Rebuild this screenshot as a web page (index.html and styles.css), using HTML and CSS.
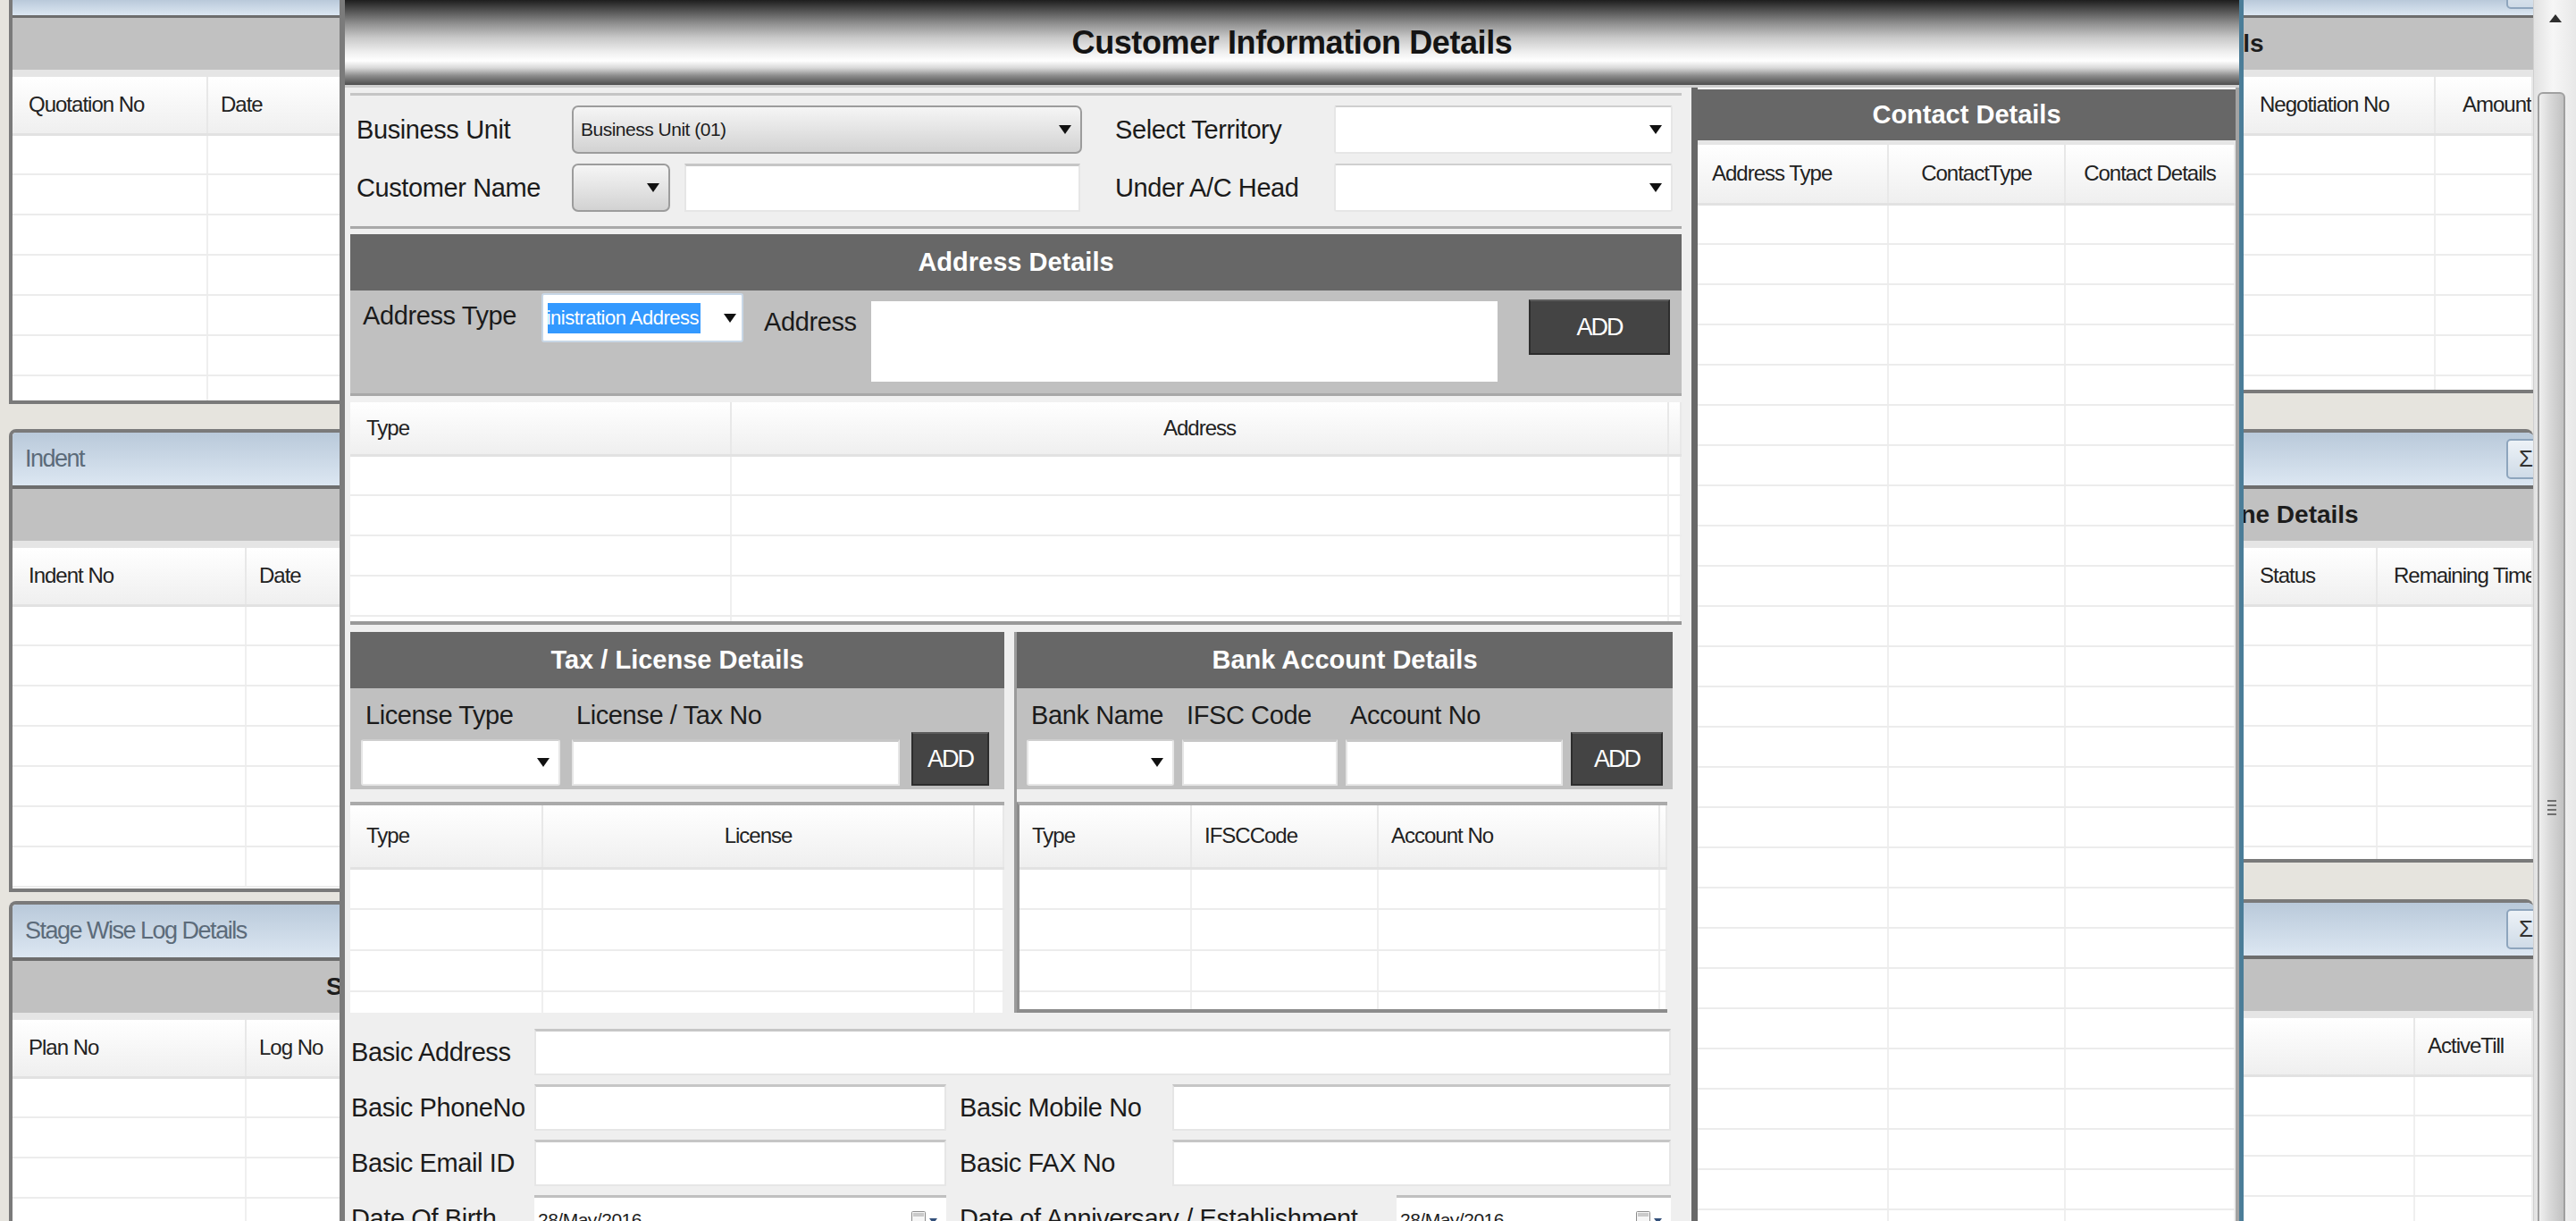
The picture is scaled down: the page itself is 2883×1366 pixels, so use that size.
FILE: index.html
```html
<!DOCTYPE html>
<html lang="en">

<head>
    <meta charset="UTF-8">
    <meta name="viewport" content="width=device-width, initial-scale=1.0">
    <title>Customer Information Details</title>
    <link rel="stylesheet" href="styles.css">
</head>

<body>
    <!-- the window behind the dialog -->
    <div class="desk">
        <div class="side">
            <div class="panel panel-cut left-a">
                <div class="panel-title"></div>
                <div class="panel-band"></div>
                <table class="grid">
                    <colgroup><col class="col-quote"><col></colgroup>
                    <thead><tr><th>Quotation No</th><th class="pad-14">Date</th></tr></thead>
                    <tbody>
                        <tr><td></td><td></td></tr>
                        <tr><td></td><td></td></tr>
                        <tr><td></td><td></td></tr>
                        <tr><td></td><td></td></tr>
                        <tr><td></td><td></td></tr>
                        <tr><td></td><td></td></tr>
                        <tr><td></td><td></td></tr>
                    </tbody>
                </table>
            </div>
            <div class="panel left-b">
                <div class="panel-title">Indent</div>
                <div class="panel-band"></div>
                <table class="grid">
                    <colgroup><col class="col-no"><col></colgroup>
                    <thead><tr><th>Indent No</th><th class="pad-14">Date</th></tr></thead>
                    <tbody>
                        <tr><td></td><td></td></tr>
                        <tr><td></td><td></td></tr>
                        <tr><td></td><td></td></tr>
                        <tr><td></td><td></td></tr>
                        <tr><td></td><td></td></tr>
                        <tr><td></td><td></td></tr>
                        <tr><td></td><td></td></tr>
                    </tbody>
                </table>
            </div>
            <div class="panel left-c">
                <div class="panel-title">Stage Wise Log Details</div>
                <div class="panel-band band-stage">Stage Wise Log Details</div>
                <table class="grid">
                    <colgroup><col class="col-no"><col></colgroup>
                    <thead><tr><th>Plan No</th><th class="pad-14">Log No</th></tr></thead>
                    <tbody>
                        <tr><td></td><td></td></tr>
                        <tr><td></td><td></td></tr>
                        <tr><td></td><td></td></tr>
                        <tr><td></td><td></td></tr>
                    </tbody>
                </table>
            </div>
        </div>

        <div class="middle"></div>

        <div class="side side-right">
            <div class="panel panel-cut right-a">
                <div class="panel-title"><span class="sigma">&Sigma;</span></div>
                <div class="panel-band band-nego">Negotiation Details</div>
                <table class="grid">
                    <colgroup><col class="col-hide"><col class="col-nego"><col></colgroup>
                    <thead><tr><th></th><th>Negotiation No</th><th class="pad-30">Amount</th></tr></thead>
                    <tbody>
                        <tr><td></td><td></td><td></td></tr>
                        <tr><td></td><td></td><td></td></tr>
                        <tr><td></td><td></td><td></td></tr>
                        <tr><td></td><td></td><td></td></tr>
                        <tr><td></td><td></td><td></td></tr>
                        <tr><td></td><td></td><td></td></tr>
                        <tr><td></td><td></td><td></td></tr>
                    </tbody>
                </table>
            </div>
            <div class="panel right-b">
                <div class="panel-title"><span class="sigma">&Sigma;</span></div>
                <div class="panel-band band-time">Timeline Details</div>
                <table class="grid">
                    <colgroup><col class="col-hide"><col class="col-status"><col></colgroup>
                    <thead><tr><th></th><th>Status</th><th>Remaining Time</th></tr></thead>
                    <tbody>
                        <tr><td></td><td></td><td></td></tr>
                        <tr><td></td><td></td><td></td></tr>
                        <tr><td></td><td></td><td></td></tr>
                        <tr><td></td><td></td><td></td></tr>
                        <tr><td></td><td></td><td></td></tr>
                        <tr><td></td><td></td><td></td></tr>
                        <tr><td></td><td></td><td></td></tr>
                    </tbody>
                </table>
            </div>
            <div class="panel right-c">
                <div class="panel-title"><span class="sigma">&Sigma;</span></div>
                <div class="panel-band"></div>
                <table class="grid">
                    <colgroup><col class="col-hide"><col class="col-blank"><col></colgroup>
                    <thead><tr><th></th><th></th><th class="pad-14">ActiveTill</th></tr></thead>
                    <tbody>
                        <tr><td></td><td></td><td></td></tr>
                        <tr><td></td><td></td><td></td></tr>
                        <tr><td></td><td></td><td></td></tr>
                        <tr><td></td><td></td><td></td></tr>
                    </tbody>
                </table>
            </div>
        </div>

        <div class="scrollbar">
            <span class="scroll-up"></span>
            <div class="scroll-thumb">
                <svg width="12" height="20" viewBox="0 0 12 20">
                    <path d="M1 3h10M1 8h10M1 13h10M1 18h10" stroke="#6f6f6f" stroke-width="2" />
                </svg>
            </div>
        </div>
    </div>

    <!-- dialog -->
    <div class="dialog">
        <div class="dialog-title">Customer Information Details</div>
        <div class="dialog-body">
            <div class="form-side">
                <div class="top-fields">
                    <span class="lbl">Business Unit</span>
                    <div class="combo combo-btn"><span class="combo-text">Business Unit (01)</span><span class="arrow"></span></div>
                    <span class="lbl lbl-gap">Select Territory</span>
                    <div class="combo"><span class="arrow"></span></div>

                    <span class="lbl">Customer Name</span>
                    <div class="name-field">
                        <div class="combo combo-btn combo-small"><span class="arrow"></span></div>
                        <div class="box"></div>
                    </div>
                    <span class="lbl lbl-gap">Under A/C Head</span>
                    <div class="combo"><span class="arrow"></span></div>
                </div>

                <div class="addr-block">
                    <div class="sec-head">Address Details</div>
                    <div class="addr-entry">
                        <span class="lbl addr-type-lbl">Address Type</span>
                        <div class="combo combo-focus">
                            <span class="combo-text"><span class="sel">Administration Address</span></span>
                            <span class="arrow"></span>
                        </div>
                        <span class="lbl addr-lbl">Address</span>
                        <div class="box addr-text"></div>
                        <button class="add addr-add">ADD</button>
                    </div>
                    <div class="addr-grid">
                        <table class="grid">
                            <colgroup><col class="col-type"><col class="col-addr"><col></colgroup>
                            <thead><tr><th>Type</th><th class="center">Address</th><th></th></tr></thead>
                            <tbody>
                                <tr><td></td><td></td><td></td></tr>
                                <tr><td></td><td></td><td></td></tr>
                                <tr><td></td><td></td><td></td></tr>
                                <tr><td></td><td></td><td></td></tr>
                                <tr><td></td><td></td><td></td></tr>
                            </tbody>
                        </table>
                    </div>
                </div>

                <div class="split">
                    <div class="tax">
                        <div class="sec-head">Tax / License Details</div>
                        <div class="entry">
                            <span class="lbl">License Type</span>
                            <span class="lbl">License / Tax No</span>
                            <div class="combo field"><span class="arrow"></span></div>
                            <div class="box field"></div>
                            <button class="add field">ADD</button>
                        </div>
                        <div class="sub-grid">
                            <table class="grid">
                                <colgroup><col class="col-ttype"><col class="col-lic"><col></colgroup>
                                <thead><tr><th>Type</th><th class="center">License</th><th></th></tr></thead>
                                <tbody>
                                    <tr><td></td><td></td><td></td></tr>
                                    <tr><td></td><td></td><td></td></tr>
                                    <tr><td></td><td></td><td></td></tr>
                                    <tr><td></td><td></td><td></td></tr>
                                </tbody>
                            </table>
                        </div>
                    </div>

                    <div class="bank">
                        <div class="sec-head">Bank Account Details</div>
                        <div class="entry">
                            <span class="lbl">Bank Name</span>
                            <span class="lbl">IFSC Code</span>
                            <span class="lbl">Account No</span>
                            <div class="combo field"><span class="arrow"></span></div>
                            <div class="box field"></div>
                            <div class="box field"></div>
                            <button class="add field">ADD</button>
                        </div>
                        <div class="sub-grid">
                            <table class="grid">
                                <colgroup><col class="col-btype"><col class="col-ifsc"><col class="col-acc"><col></colgroup>
                                <thead><tr><th>Type</th><th>IFSCCode</th><th>Account No</th><th></th></tr></thead>
                                <tbody>
                                    <tr><td></td><td></td><td></td><td></td></tr>
                                    <tr><td></td><td></td><td></td><td></td></tr>
                                    <tr><td></td><td></td><td></td><td></td></tr>
                                    <tr><td></td><td></td><td></td><td></td></tr>
                                </tbody>
                            </table>
                        </div>
                    </div>
                </div>

                <div class="basic">
                    <span class="lbl">Basic Address</span>
                    <div class="box span-3"></div>

                    <span class="lbl">Basic PhoneNo</span>
                    <div class="box"></div>
                    <span class="lbl lbl-in">Basic Mobile No</span>
                    <div class="box"></div>

                    <span class="lbl">Basic Email ID</span>
                    <div class="box"></div>
                    <span class="lbl lbl-in">Basic FAX No</span>
                    <div class="box"></div>

                    <div class="date-row">
                        <span class="lbl">Date Of Birth</span>
                        <div class="date-box">
                            <span>28/May/2016</span>
                            <svg class="cal" width="34" height="24" viewBox="0 0 34 24">
                                <rect x="1.5" y="2.5" width="15" height="19" rx="1" fill="#f6f6f6" stroke="#8c8c8c" />
                                <rect x="3" y="4" width="12" height="4" fill="#cacaca" />
                                <path d="M21 10h9l-4.5 6z" fill="#33507a" />
                            </svg>
                        </div>
                        <span class="lbl lbl-in">Date of Anniversary / Establishment</span>
                        <div class="date-box">
                            <span>28/May/2016</span>
                            <svg class="cal" width="34" height="24" viewBox="0 0 34 24">
                                <rect x="1.5" y="2.5" width="15" height="19" rx="1" fill="#f6f6f6" stroke="#8c8c8c" />
                                <rect x="3" y="4" width="12" height="4" fill="#cacaca" />
                                <path d="M21 10h9l-4.5 6z" fill="#33507a" />
                            </svg>
                        </div>
                    </div>
                </div>
            </div>

            <div class="contact-side">
                <div class="sec-head contact-head">Contact Details</div>
                <div class="contact-grid">
                    <table class="grid">
                        <colgroup><col class="col-ctype"><col class="col-ckind"><col></colgroup>
                        <thead><tr><th>Address Type</th><th class="center">ContactType</th><th class="center">Contact Details</th></tr></thead>
                        <tbody>
                            <tr><td></td><td></td><td></td></tr>
                            <tr><td></td><td></td><td></td></tr>
                            <tr><td></td><td></td><td></td></tr>
                            <tr><td></td><td></td><td></td></tr>
                            <tr><td></td><td></td><td></td></tr>
                            <tr><td></td><td></td><td></td></tr>
                            <tr><td></td><td></td><td></td></tr>
                            <tr><td></td><td></td><td></td></tr>
                            <tr><td></td><td></td><td></td></tr>
                            <tr><td></td><td></td><td></td></tr>
                            <tr><td></td><td></td><td></td></tr>
                            <tr><td></td><td></td><td></td></tr>
                            <tr><td></td><td></td><td></td></tr>
                            <tr><td></td><td></td><td></td></tr>
                            <tr><td></td><td></td><td></td></tr>
                            <tr><td></td><td></td><td></td></tr>
                            <tr><td></td><td></td><td></td></tr>
                            <tr><td></td><td></td><td></td></tr>
                            <tr><td></td><td></td><td></td></tr>
                            <tr><td></td><td></td><td></td></tr>
                            <tr><td></td><td></td><td></td></tr>
                            <tr><td></td><td></td><td></td></tr>
                            <tr><td></td><td></td><td></td></tr>
                            <tr><td></td><td></td><td></td></tr>
                            <tr><td></td><td></td><td></td></tr>
                            <tr><td></td><td></td><td></td></tr>
                        </tbody>
                    </table>
                </div>
            </div>
        </div>
    </div>
</body>

</html>
```

FILE: styles.css
```css
* {
    box-sizing: border-box;
    margin: 0;
    padding: 0;
}

body {
    position: relative;
    width: 2883px;
    height: 1366px;
    overflow: hidden;
    background-color: #e6e4de;
    font-family: "Liberation Sans", Arial, sans-serif;
    color: #1d1d1d;
}

/* ---------- window behind ---------- */

.desk {
    display: grid;
    grid-template-columns: 690px 1fr 635px 48px;
    height: 1366px;
    padding-left: 10px;
}

.side {
    display: flex;
    flex-direction: column;
    min-height: 0;
    overflow: hidden;
}

.panel {
    flex-shrink: 0;
    display: flex;
    flex-direction: column;
    overflow: hidden;
    background-color: #fff;
    border: 4px solid #7a7a7a;
    border-radius: 8px 8px 0 0;
}

.panel-cut {
    border-top: 0;
    border-radius: 0;
}

.side-right .panel {
    border-right: 0;
}

.left-a {
    height: 452px;
}

.left-b {
    height: 518px;
    margin-top: 28px;
}

.left-c {
    flex: 1;
    margin-top: 10px;
    border-bottom: 0;
}

.right-a {
    height: 440px;
}

.right-b {
    height: 485px;
    margin-top: 40px;
}

.right-c {
    flex: 1;
    margin-top: 41px;
    border-bottom: 0;
}

.panel-title {
    flex-shrink: 0;
    height: 63px;
    display: flex;
    align-items: center;
    padding-left: 14px;
    background: linear-gradient(#b9c9da, #dce7f2);
    border-bottom: 4px solid #6d6d6d;
    font-size: 27px;
    letter-spacing: -1.5px;
    color: #5c6b7a;
    overflow: hidden;
}

.panel-cut .panel-title {
    height: 20px;
    border-bottom-width: 3px;
}

.sigma {
    flex-shrink: 0;
    width: 50px;
    height: 45px;
    margin-left: auto;
    margin-right: -20px;
    padding-left: 12px;
    border: 2px solid #8ea5bd;
    border-radius: 5px;
    background: linear-gradient(#edf2f7, #cfdbe7);
    font-size: 26px;
    line-height: 41px;
    letter-spacing: 0;
    color: #333;
}

.panel-cut .sigma {
    align-self: flex-start;
    margin-top: -35px;
}

.panel-band {
    flex-shrink: 0;
    height: 66px;
    display: flex;
    align-items: center;
    background-color: #c1c1c1;
    border-bottom: 8px solid #e5e5e5;
    font-weight: bold;
    font-size: 28px;
    white-space: nowrap;
}

.band-stage {
    padding-left: 351px;
}

.band-nego {
    padding-left: 76px;
}

.band-time {
    padding-left: 223px;
}

/* grids */

.grid {
    width: 100%;
    border-collapse: collapse;
    table-layout: fixed;
    background-color: #fff;
}

.grid th {
    height: 64px;
    padding-left: 18px;
    background: linear-gradient(#ffffff, #efefef);
    border-right: 2px solid #e8e8e8;
    border-bottom: 3px solid #e2e2e2;
    text-align: left;
    font-weight: normal;
    font-size: 24px;
    letter-spacing: -1px;
    color: #222;
    white-space: nowrap;
    overflow: hidden;
}

.grid td {
    height: 45px;
    background-color: #fff;
    border-right: 2px solid #efefef;
    border-bottom: 2px solid #ececec;
}

.grid th.center {
    padding-left: 0;
    text-align: center;
}

.grid th.pad-14 {
    padding-left: 14px;
}

.grid th.pad-30 {
    padding-left: 30px;
}

.col-quote { width: 218px; }
.col-no { width: 261px; }
.col-hide { width: 306px; }
.col-nego { width: 215px; }
.col-status { width: 150px; }
.col-blank { width: 192px; }

.scrollbar {
    display: flex;
    flex-direction: column;
    align-items: flex-start;
    overflow: hidden;
    background: linear-gradient(90deg, #e2e2e2, #f6f6f6 45%, #e8e8e8);
    border-left: 1px solid #d0d0d0;
}

.scroll-up {
    margin: 16px 0 0 17px;
    border-left: 7px solid transparent;
    border-right: 7px solid transparent;
    border-bottom: 9px solid #2e2e2e;
}

.scroll-thumb {
    flex-shrink: 0;
    width: 31px;
    height: 1600px;
    margin: 78px 0 0 4px;
    display: flex;
    align-items: center;
    justify-content: center;
    border: 2px solid #a0a0a0;
    border-radius: 6px;
    background: linear-gradient(90deg, #efefef, #d6d6d6 50%, #c2c2c2);
}

/* ---------- dialog ---------- */

.dialog {
    position: absolute;
    top: 0;
    left: 380px;
    width: 2131px;
    height: 1366px;
    display: flex;
    flex-direction: column;
    background-color: #efefef;
    border-left: 6px solid #7b7b7b;
    border-right: 5px solid #4b7d98;
}

.dialog-title {
    flex-shrink: 0;
    height: 98px;
    display: flex;
    align-items: center;
    justify-content: center;
    border-bottom: 3px solid #cfcfcf;
    background: linear-gradient(#1e1e1e 0px, #4a4a4a 10px, #8e8e8e 26px, #c8c8c8 42px, #eeeeee 58px, #ffffff 68px, #d8d8d8 76px, #8a8a8a 85px, #4e4e4e 95px);
    font-weight: bold;
    font-size: 36px;
    letter-spacing: -0.4px;
    color: #141414;
}

.dialog-body {
    flex: 1;
    min-height: 0;
    display: flex;
    align-items: flex-start;
    gap: 11px;
    padding-left: 6px;
}

.form-side {
    flex-shrink: 0;
    width: 1490px;
    margin-top: 6px;
    border-top: 3px solid #c5c5c5;
}

.lbl {
    font-size: 29px;
    line-height: 40px;
    letter-spacing: -0.4px;
    color: #1b1b1b;
    white-space: nowrap;
}

.lbl-gap {
    padding-left: 37px;
}

.top-fields {
    display: grid;
    grid-template-columns: 241px 571px 282px 379px;
    grid-auto-rows: 54px;
    row-gap: 11px;
    align-items: center;
    padding: 11px 0 16px 7px;
}

.combo {
    display: flex;
    align-items: center;
    height: 54px;
    padding: 0 10px 0 8px;
    overflow: hidden;
    background-color: #fff;
    border: 2px solid #e6e6e6;
    border-top-color: #cfcfcf;
    border-radius: 3px;
}

.combo-btn {
    background: linear-gradient(#f5f5f5, #e4e4e4 50%, #d2d2d2);
    border: 2px solid #9c9c9c;
    border-radius: 7px;
}

.combo-small {
    width: 110px;
    flex-shrink: 0;
}

.combo-text {
    flex: 1;
    overflow: hidden;
    white-space: nowrap;
    font-size: 21px;
    letter-spacing: -0.5px;
}

.arrow {
    flex-shrink: 0;
    margin-left: auto;
    border-left: 7px solid transparent;
    border-right: 7px solid transparent;
    border-top: 10px solid #111;
}

.box {
    background-color: #fff;
    border: 2px solid #e6e6e6;
    border-top: 3px solid #c6c6c6;
}

.name-field {
    display: flex;
    gap: 16px;
    height: 54px;
    padding-right: 2px;
}

.name-field .box {
    flex: 1;
}

/* address */

.addr-block {
    border-top: 3px solid #a9a9a9;
    padding-top: 6px;
}

.sec-head {
    flex-shrink: 0;
    height: 63px;
    display: flex;
    align-items: center;
    justify-content: center;
    background-color: #676767;
    color: #fff;
    font-weight: bold;
    font-size: 29px;
}

.addr-entry {
    height: 115px;
    display: flex;
    align-items: flex-start;
    padding-left: 14px;
    background-color: #c0c0c0;
}

.addr-type-lbl {
    width: 200px;
    margin-top: 8px;
}

.combo-focus {
    width: 226px;
    height: 55px;
    margin-top: 3px;
    padding: 0 6px 0 5px;
    border-color: #c8d7e6;
}

.sel {
    display: inline-block;
    margin-left: -45px;
    padding-right: 2px;
    background-color: #3399ff;
    color: #fff;
    font-size: 22px;
    line-height: 34px;
}

.addr-lbl {
    width: 120px;
    margin: 15px 0 0 23px;
}

.addr-text {
    width: 701px;
    height: 90px;
    margin-top: 12px;
    border: 0;
}

.add {
    display: flex;
    align-items: center;
    justify-content: center;
    background-color: #444;
    border: 2px solid #2d2d2d;
    border-top-color: #5c5c5c;
    color: #fff;
    font-family: inherit;
    font-size: 27px;
    letter-spacing: -2px;
}

.addr-add {
    width: 158px;
    height: 62px;
    margin: 10px 0 0 35px;
}

.addr-grid {
    height: 255px;
    overflow: hidden;
    border-top: 3px solid #a8a8a8;
    padding-top: 7px;
    background-color: #f1f1f1;
}

.addr-grid .grid th {
    height: 59px;
}

.col-type { width: 426px; }
.col-addr { width: 1049px; }

/* tax and bank */

.split {
    display: flex;
    border-top: 4px solid #999;
    padding-top: 8px;
}

.tax {
    flex-shrink: 0;
    width: 732px;
}

.bank {
    flex-shrink: 0;
    width: 737px;
    margin-left: 11px;
    border-left: 3px solid #9b9b9b;
}

.entry {
    display: grid;
    grid-template-rows: 40px 52px;
    align-items: center;
    row-gap: 7px;
    column-gap: 13px;
    padding: 10px 0 4px 12px;
    background-color: #c0c0c0;
}

.tax .entry {
    grid-template-columns: 223px 367px 87px;
}

.bank .entry {
    grid-template-columns: 165px 174px 243px 103px;
    column-gap: 9px;
    padding-left: 11px;
}

.entry .lbl {
    padding-left: 5px;
}

.entry .field {
    grid-row: 2;
    height: 52px;
}

.entry .add {
    height: 60px;
    align-self: end;
}

.sub-grid {
    height: 236px;
    margin-top: 14px;
    overflow: hidden;
    border-top: 4px solid #aaa;
    background-color: #fff;
}

.bank .sub-grid {
    margin-right: 6px;
    border-left: 3px solid #8c8c8c;
    border-bottom: 4px solid #8c8c8c;
}

.sub-grid .grid th {
    height: 70px;
}

.sub-grid .grid td {
    height: 46px;
}

.bank .grid th {
    padding-left: 14px;
}

.col-ttype { width: 215px; }
.col-lic { width: 483px; }
.col-btype { width: 192px; }
.col-ifsc { width: 209px; }
.col-acc { width: 315px; }

/* basic fields */

.basic {
    display: grid;
    grid-template-columns: 206px 461px 253px 558px;
    grid-auto-rows: 52px;
    row-gap: 10px;
    align-items: center;
    padding-top: 18px;
}

.basic .lbl {
    padding-left: 1px;
}

.basic .lbl-in {
    padding-left: 15px;
}

.basic .box {
    height: 52px;
}

.span-3 {
    grid-column: 2 / 5;
}

.date-row {
    grid-column: 1 / -1;
    display: grid;
    grid-template-columns: 206px 461px 504px 307px;
    align-items: center;
}

.date-box {
    display: flex;
    align-items: center;
    height: 52px;
    padding: 0 6px 0 4px;
    background-color: #fff;
    border-top: 3px solid #c0c0c0;
    font-size: 21px;
    letter-spacing: -0.5px;
}

.cal {
    margin-left: auto;
}

/* contact */

.contact-side {
    align-self: stretch;
    flex: 1;
    display: flex;
    flex-direction: column;
    overflow: hidden;
    background-color: #fff;
    border-left: 7px solid #686868;
    border-right: 4px solid #a3a3a3;
}

.contact-head {
    height: 57px;
    margin-top: 2px;
}

.contact-grid {
    padding-top: 5px;
    background-color: #e6e6e6;
}

.contact-grid .grid th {
    height: 66px;
    padding-left: 16px;
}

.contact-grid .grid th.center {
    padding-left: 0;
}

.col-ctype { width: 213px; }
.col-ckind { width: 198px; }
```
